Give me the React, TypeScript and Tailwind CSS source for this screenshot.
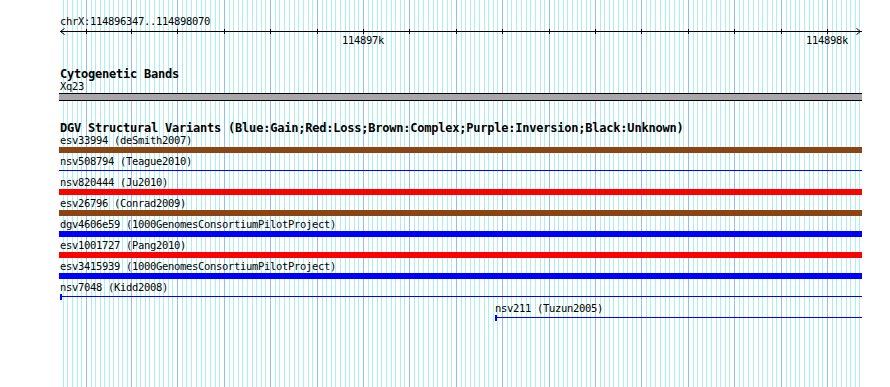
import React from "react";

const MAJORS = [86, 131, 177, 224, 270, 317, 363, 409, 456, 502, 549, 595, 641, 688, 734, 781, 827];

function minorLines(): number[] {
  const out: number[] = [];
  for (let k = 5; k >= 1; k--) out.push(Math.round(86 - k * 4.63));
  for (let j = 0; j < MAJORS.length - 1; j++) {
    const a = MAJORS[j];
    const b = MAJORS[j + 1];
    for (let k = 1; k < 10; k++) out.push(Math.round(a + ((b - a) * k) / 10));
  }
  for (let k = 1; k <= 8; k++) out.push(Math.round(827 + k * 4.63));
  return out.filter((x) => x >= 59 && x <= 861);
}

type Row = {
  label: string;
  kind: "bar" | "line";
  color?: string;
  cap?: boolean;
  offset?: "none" | "one" | "far";
};

const ROWS: Row[] = [
  { label: "esv33994 (deSmith2007)", kind: "bar", color: "brown" },
  { label: "nsv508794 (Teague2010)", kind: "line" },
  { label: "nsv820444 (Ju2010)", kind: "bar", color: "red" },
  { label: "esv26796 (Conrad2009)", kind: "bar", color: "brown" },
  { label: "dgv4606e59 (1000GenomesConsortiumPilotProject)", kind: "bar", color: "blue" },
  { label: "esv1001727 (Pang2010)", kind: "bar", color: "red" },
  { label: "esv3415939 (1000GenomesConsortiumPilotProject)", kind: "bar", color: "blue" },
  { label: "nsv7048 (Kidd2008)", kind: "line", cap: true, offset: "one" },
  { label: "nsv211 (Tuzun2005)", kind: "line", cap: true, offset: "far" },
];

const barClass: Record<string, string> = {
  brown: "bg-[#8b4513]",
  red: "bg-[#ff0000]",
  blue: "bg-[#0000ff]",
};

const small =
  "font-['DejaVu_Sans_Mono',monospace] text-[10.5px] tracking-[-0.32px] h-[13px] leading-[13px] text-black whitespace-nowrap";
const bold =
  "font-['DejaVu_Sans_Mono',monospace] text-[12px] tracking-[-0.22px] font-bold text-black whitespace-nowrap";

function FeatureRow({ row }: { row: Row }) {
  const off =
    row.offset === "far" ? "ml-[436px]" : row.offset === "one" ? "ml-[1px]" : "ml-0";
  return (
    <div className={`flex flex-col h-[21px] ${off}`}>
      <div className={`${small} ${row.offset ? "" : "pl-[1px]"}`}>{row.label}</div>
      {row.kind === "bar" ? (
        <div className={`h-[6px] w-full ${barClass[row.color || "blue"]}`} />
      ) : (
        <div className="h-[6px] w-full flex items-start">
          {row.cap && <div className="w-[2px] h-[6px] bg-[#0000ff] shrink-0" />}
          <div className="mt-[2px] h-[1px] flex-1 bg-[#0000ff]" />
        </div>
      )}
    </div>
  );
}

export default function App() {
  const minors = minorLines();
  return (
    <div className="relative w-[890px] h-[387px] bg-white overflow-hidden">
      {/* background grid drawing */}
      <svg
        className="absolute inset-0"
        width={890}
        height={387}
        shapeRendering="crispEdges"
      >
        {minors.map((x) => (
          <rect key={`m${x}`} x={x} y={0} width={1} height={387} fill="#afeeee" />
        ))}
        {MAJORS.map((x) => (
          <rect key={`M${x}`} x={x} y={0} width={1} height={387} fill="#8ec0f2" />
        ))}
      </svg>

      <div className="relative flex flex-col w-[862px] pl-[59px] pt-[15px]">
        <div className={`${small} pl-[1px]`}>chrX:114896347..114898070</div>

        {/* ruler */}
        <div className="relative h-[20px] w-[803px]">
          <svg
            className="absolute left-0 top-0"
            width={803}
            height={20}
            shapeRendering="crispEdges"
          >
            <rect x={1} y={3} width={802} height={1} fill="#000" />
            <path d="M5.5 0.5 L1.5 3.5 L5.5 6.5" stroke="#000" strokeWidth={1} fill="none" shapeRendering="auto" />
            <path d="M797.5 0.5 L801.5 3.5 L797.5 6.5" stroke="#000" strokeWidth={1} fill="none" shapeRendering="auto" />
            {MAJORS.map((x) => (
              <rect key={x} x={x - 59} y={1} width={1} height={5} fill="#000" />
            ))}
          </svg>
          <span className={`absolute top-[6px] left-[283px] ${small}`}>114897k</span>
          <span className={`absolute top-[6px] left-[747px] ${small}`}>114898k</span>
        </div>

        <div className={`mt-[21px] h-[11px] leading-[11px] pl-[1px] ${bold}`}>Cytogenetic Bands</div>
        <div className={`${small} pl-[1px]`}>Xq23</div>
        <div className="h-[8px] w-[803px] border-y border-black bg-[#aaa7aa]" />

        <div className={`mt-[21px] h-[12px] leading-[12px] pl-[1px] ${bold}`}>
          DGV Structural Variants (Blue:Gain;Red:Loss;Brown:Complex;Purple:Inversion;Black:Unknown)
        </div>

        <div className="flex flex-col w-[803px]">
          {ROWS.map((r) => (
            <FeatureRow key={r.label} row={r} />
          ))}
        </div>
      </div>
    </div>
  );
}
